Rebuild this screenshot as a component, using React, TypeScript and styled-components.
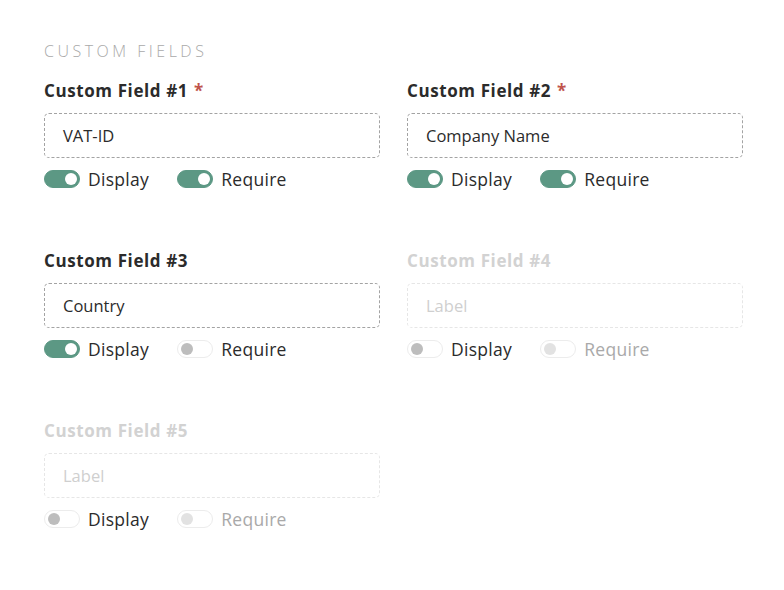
import styled, { createGlobalStyle } from 'styled-components';

const Global = createGlobalStyle`
  body { margin: 0; background: #fff; font-family: "Open Sans", "Noto Sans", sans-serif; }
`;

type FieldDef = {
  n: number;
  value?: string;
  required?: boolean;
  display: boolean;
  require: boolean;
  enabled: boolean;
};

const fields: FieldDef[] = [
  { n: 1, value: 'VAT-ID', required: true, display: true, require: true, enabled: true },
  { n: 2, value: 'Company Name', required: true, display: true, require: true, enabled: true },
  { n: 3, value: 'Country', display: true, require: false, enabled: true },
  { n: 4, display: false, require: false, enabled: false },
  { n: 5, display: false, require: false, enabled: false },
];

export default function App() {
  return (
    <>
      <Global />
      <Page>
        <Heading>CUSTOM FIELDS</Heading>
        <Grid>
          {fields.map((f) => (
            <Field key={f.n}>
              <Label $muted={!f.enabled}>
                Custom Field #{f.n}
                {f.required && <Star>*</Star>}
              </Label>
              <Input $muted={!f.enabled}>
                {f.value ? <Value>{f.value}</Value> : <Placeholder>Label</Placeholder>}
              </Input>
              <Toggles>
                <ToggleItem>
                  <Switch $on={f.display} />
                  <ToggleText>Display</ToggleText>
                </ToggleItem>
                <ToggleItem>
                  <Switch $on={f.require} $disabled={!f.display} />
                  <ToggleText $muted={!f.display}>Require</ToggleText>
                </ToggleItem>
              </Toggles>
            </Field>
          ))}
        </Grid>
      </Page>
    </>
  );
}

const Page = styled.div`
  padding: 40px 41px 0 44px;
`;

const Heading = styled.div`
  font-size: 16px;
  font-weight: 300;
  letter-spacing: 3.5px;
  color: #a9a9a9;
  line-height: 22px;
`;

const Grid = styled.div`
  display: grid;
  grid-template-columns: 336px 336px;
  column-gap: 27px;
  row-gap: 58px;
  margin-top: 17px;
`;

const Field = styled.div`
  display: flex;
  flex-direction: column;
`;

const Label = styled.div<{ $muted?: boolean }>`
  font-size: 17px;
  font-weight: 700;
  letter-spacing: 0.6px;
  line-height: 24px;
  color: ${(p) => (p.$muted ? '#d2d2d2' : '#2b2b2b')};
`;

const Star = styled.span`
  color: #c0544c;
  margin-left: 6px;
`;

const Input = styled.div<{ $muted?: boolean }>`
  margin-top: 10px;
  height: 45px;
  box-sizing: border-box;
  border: 1px dashed ${(p) => (p.$muted ? '#e6e6e6' : '#a3a3a3')};
  border-radius: 5px;
  display: flex;
  align-items: center;
  padding: 0 18px;
  font-size: 16.5px;
`;

const Value = styled.span`
  color: #2b2b2b;
`;

const Placeholder = styled.span`
  color: #cfcfcf;
`;

const Toggles = styled.div`
  display: flex;
  gap: 28px;
  margin-top: 9px;
  height: 24px;
  align-items: center;
`;

const ToggleItem = styled.div`
  display: flex;
  align-items: center;
  gap: 8px;
`;

const Switch = styled.span<{ $on: boolean; $disabled?: boolean }>`
  position: relative;
  width: 36px;
  height: 18px;
  box-sizing: border-box;
  border-radius: 9px;
  background: ${(p) => (p.$on ? '#5c9884' : '#fff')};
  border: 1px solid ${(p) => (p.$on ? '#5c9884' : '#ececec')};
  &::after {
    content: '';
    position: absolute;
    top: 2px;
    left: ${(p) => (p.$on ? '20px' : '3px')};
    width: 12px;
    height: 12px;
    border-radius: 50%;
    background: ${(p) => (p.$on ? '#fff' : p.$disabled ? '#e2e2e2' : '#bdbdbd')};
  }
`;

const ToggleText = styled.span<{ $muted?: boolean }>`
  font-size: 17.5px;
  letter-spacing: 0.3px;
  color: ${(p) => (p.$muted ? '#a9a9a9' : '#2b2b2b')};
`;
